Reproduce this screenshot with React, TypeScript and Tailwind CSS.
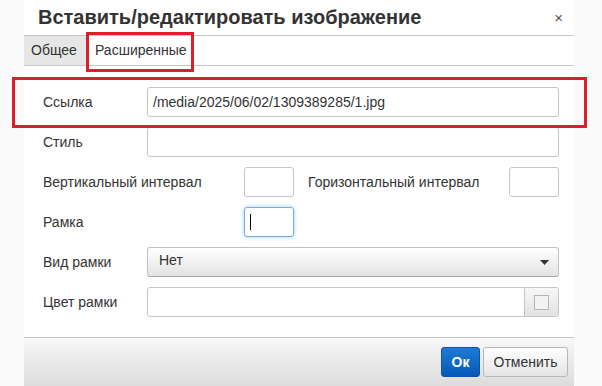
import React from "react";

const fieldBox = "h-[30px] border border-[#c5c5c5] rounded-[3px] bg-white";

function Row({ label, children }: { label: string; children?: React.ReactNode }) {
  return (
    <div className="flex items-center h-[30px]">
      <div className="w-[104px] shrink-0">{label}</div>
      {children}
    </div>
  );
}

export default function App() {
  return (
    <div className="relative w-[602px] h-[386px] overflow-hidden bg-[#fafafa] flex font-['Liberation_Sans',Arial,sans-serif] text-[14px] text-[#333]">
      <div className="ml-6 w-[550px] bg-white flex flex-col">
        {/* header */}
        <div className="h-[36px] border-b border-[#c8c8c8] flex items-center justify-between pl-[14px] pr-[11px]">
          <h1 className="text-[20px] font-bold leading-none -mt-[2px]">
            Вставить/редактировать изображение
          </h1>
          <span className="text-[15px] text-[#555] leading-none">×</span>
        </div>

        {/* tabs */}
        <div className="h-[30px] border-b border-[#c8c8c8] flex">
          <div className="w-[63px] bg-[#e6e6e6] flex items-center pl-[7px]">Общее</div>
          <div className="w-[105px] ml-px bg-white flex items-center pl-[7px]">Расширенные</div>
        </div>

        {/* form */}
        <div className="h-[271px] pt-[21px] pl-[19px] pr-[15px] flex flex-col gap-[10px]">
          <Row label="Ссылка">
            <div className={`${fieldBox} flex-1 flex items-center pl-[5px]`}>
              /media/2025/06/02/1309389285/1.jpg
            </div>
          </Row>
          <Row label="Стиль">
            <div className={`${fieldBox} flex-1`} />
          </Row>
          <div className="flex items-center h-[30px]">
            <div className="w-[201px] shrink-0">Вертикальный интервал</div>
            <div className={`${fieldBox} w-[50px]`} />
            <div className="ml-[14px]">Горизонтальный интервал</div>
            <div className={`${fieldBox} w-[50px] ml-auto`} />
          </div>
          <Row label="Рамка">
            <div className="ml-[97px] w-[50px] h-[30px] rounded-[3px] border border-[#7fa9d6] bg-white shadow-[0_0_4px_rgba(82,168,236,0.55)] flex items-center pl-[5px]">
              <span className="w-px h-[16px] bg-black" />
            </div>
          </Row>
          <Row label="Вид рамки">
            <div className="flex-1 h-[30px] border border-[#c0c0c0] border-b-[#a8a8a8] rounded-[3px] bg-gradient-to-b from-white to-[#e3e3e3] flex items-center justify-between pl-[11px] pr-[9px]">
              <span className="-mt-[3px]">Нет</span>
              <svg width="9" height="5" viewBox="0 0 9 5">
                <path d="M0 0h9L4.5 5z" fill="#333" />
              </svg>
            </div>
          </Row>
          <Row label="Цвет рамки">
            <div className={`${fieldBox} flex-1 flex overflow-hidden`}>
              <div className="flex-1" />
              <div className="w-[34px] border-l border-[#c5c5c5] bg-gradient-to-b from-[#f7f7f7] to-[#e2e2e2] flex items-center justify-center">
                <div className="w-[15px] h-[15px] border border-[#b5b5b5] bg-[#f2f2f2]" />
              </div>
            </div>
          </Row>
        </div>

        {/* footer */}
        <div className="flex-1 border-t border-[#c8c8c8] bg-gradient-to-b from-[#f8f8f8] to-[#dcdcdc] flex justify-end items-start pt-[9px] pr-[6px] gap-[3px]">
          <button className="w-[39px] h-[30px] rounded-[3px] border border-[#0b52a8] bg-gradient-to-b from-[#1e7ad6] to-[#0659b8] text-white font-bold">
            Ок
          </button>
          <button className="w-[85px] h-[30px] rounded-[3px] border border-[#b8b8b8] bg-gradient-to-b from-white to-[#e4e4e4] text-[#333]">
            Отменить
          </button>
        </div>
      </div>

      {/* red highlight annotations */}
      <div className="absolute left-[86px] top-[32px] w-[108px] h-[40px] border-[3px] border-[#dc1f2b]" />
      <div className="absolute left-[12px] top-[77px] w-[575px] h-[51px] border-[3px] border-[#dc1f2b]" />
    </div>
  );
}
